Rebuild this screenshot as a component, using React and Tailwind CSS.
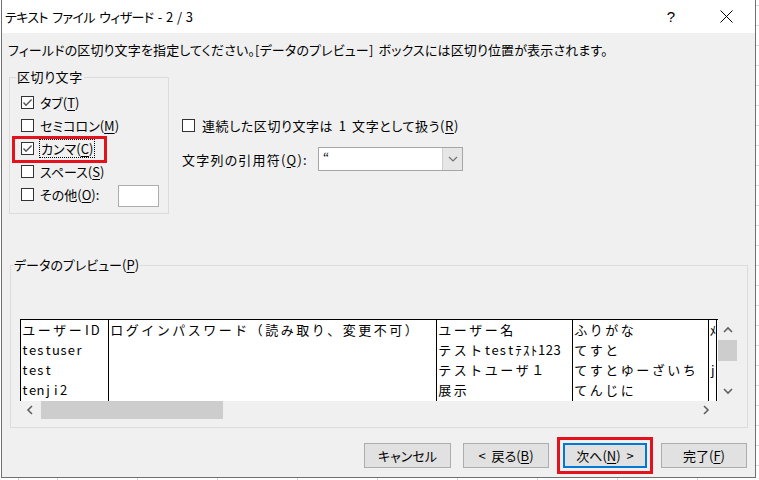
import React from "react";

function Check({ checked }) {
  return (
    <span className="w-[13px] h-[13px] border border-[#333333] bg-white flex items-center justify-center shrink-0">
      {checked && (
        <svg width="11" height="11" viewBox="0 0 11 11">
          <polyline points="1.5,5.5 4,8.2 9.6,2.4" fill="none" stroke="#555555" strokeWidth="1.4" />
        </svg>
      )}
    </span>
  );
}

function U({ children }) {
  return <span className="underline underline-offset-2">{children}</span>;
}

function isFull(ch) {
  const c = ch.charCodeAt(0);
  return c > 0xff && !(c >= 0xff61 && c <= 0xff9f);
}

function Mono({ text }) {
  return (
    <span className="flex">
      {Array.from(text).map((ch, i) => (
        <span key={i} className={(isFull(ch) ? "w-[15.5px]" : "w-[7.75px]") + " shrink-0 text-center"}>
          {ch}
        </span>
      ))}
    </span>
  );
}

function Chevron({ dir }) {
  const pts = {
    up: "1,6 5,2 9,6",
    down: "1,2 5,6 9,2",
    left: "6,1 2,5 6,9",
    right: "2,1 6,5 2,9",
  }[dir];
  const vert = dir === "up" || dir === "down";
  return (
    <svg width={vert ? 10 : 8} height={vert ? 8 : 10} viewBox={vert ? "0 0 10 8" : "0 0 8 10"}>
      <polyline points={pts} fill="none" stroke="#606060" strokeWidth="1.6" />
    </svg>
  );
}

const cols = [
  { w: "w-[88px]", rows: ["ユーザーID", "testuser", "test", "tenji2"] },
  { w: "w-[328px]", rows: ["ログインパスワード（読み取り、変更不可）", "", "", ""] },
  { w: "w-[136px]", rows: ["ユーザー名", "テストtestﾃｽﾄ123", "テストユーザ１", "展示"] },
  { w: "w-[136px]", rows: ["ふりがな", "てすと", "てすとゆーざいち", "てんじに"] },
  { w: "w-[8px]", rows: ["ﾒ", "", "j", ""] },
  { w: "w-[2px]", rows: ["", "", "", ""] },
];

function Btn({ children, className = "" }) {
  return (
    <button
      type="button"
      className={"h-[25px] border border-[#adadad] bg-[#e1e1e1] flex items-center justify-center leading-[17px] whitespace-nowrap [word-spacing:3px] " + className}
    >
      {children}
    </button>
  );
}

export default function App() {
  return (
    <div className="w-[759px] h-[480px] overflow-hidden bg-white flex flex-col font-['Noto_Sans_CJK_JP','Noto_Sans',sans-serif] text-[13px] text-black">
      <div className="flex h-[478px] shrink-0">
        <div className="ml-[1px] w-[755px] h-[478px] border-l border-r border-b border-[#707070] flex flex-col bg-[#f0f0f0] [font-feature-settings:'palt'] [word-spacing:2px]">
          {/* Title bar */}
          <div className="h-[33px] bg-white flex items-center shrink-0">
            <span className="pl-[3px] leading-[17px] whitespace-nowrap tracking-[-0.6px]">テキスト ファイル ウィザード - 2 / 3</span>
            <span className="ml-auto w-[12px] text-center text-[15px] leading-[18px] font-['Liberation_Sans',sans-serif]">?</span>
            <span className="ml-[43px] mr-[22px] w-[13px] h-[13px] flex items-center justify-center">
              <svg width="13" height="13" viewBox="0 0 13 13">
                <line x1="0.5" y1="0.5" x2="12.5" y2="12.5" stroke="#000" strokeWidth="1" />
                <line x1="12.5" y1="0.5" x2="0.5" y2="12.5" stroke="#000" strokeWidth="1" />
              </svg>
            </span>
          </div>

          {/* Body */}
          <div className="flex-1 flex flex-col">
            <p className="mt-[8px] pl-[6px] leading-[17px] whitespace-nowrap tracking-[0.15px]">
              フィールドの区切り文字を指定してください。[データのプレビュー] ボックスには区切り位置が表示されます。
            </p>

            <div className="flex mt-[11px]">
              <fieldset className="ml-[7px] w-[160px] h-[145px] border border-[#dcdcdc]">
                <legend className="ml-[6px] px-[1px] leading-[16px] tracking-[0.6px]">区切り文字</legend>
                <div className="mt-[6px] ml-[11px] flex flex-col">
                  <div className="h-[23px] flex items-center">
                    <Check checked />
                    <span className="ml-[6px] leading-[17px]">タブ(<U>T</U>)</span>
                  </div>
                  <div className="h-[23px] flex items-center">
                    <Check />
                    <span className="ml-[6px] leading-[17px]">セミコロン(<U>M</U>)</span>
                  </div>
                  <div className="h-[23px] flex items-center relative">
                    <Check checked />
                    <span className="ml-[5px] leading-[17px] border border-dotted border-black px-[1px]">カンマ(<U>C</U>)</span>
                    <span className="absolute left-[-9px] top-[-1px] w-[95px] h-[27px] border-[3px] border-[#e3121c]" />
                  </div>
                  <div className="h-[23px] flex items-center">
                    <Check />
                    <span className="ml-[6px] leading-[17px]">スペース(<U>S</U>)</span>
                  </div>
                  <div className="h-[23px] flex items-center">
                    <Check />
                    <span className="ml-[6px] leading-[17px] flex-1">その他(<U>O</U>):</span>
                    <span className="w-[41px] h-[22px] mr-[9px] mt-[2px] bg-white border border-[#adadad]" />
                  </div>
                </div>
              </fieldset>

              <div className="ml-[12px] flex flex-col">
                <div className="mt-[48px] h-[16px] flex items-center">
                  <span className="ml-[1px]">
                    <Check />
                  </span>
                  <span className="ml-[7px] leading-[17px] whitespace-nowrap tracking-[0.6px]">連続した区切り文字は 1 文字として扱う(<U>R</U>)</span>
                </div>
                <div className="mt-[14px] h-[24px] flex items-center">
                  <span className="w-[137px] pl-[1px] leading-[17px] whitespace-nowrap tracking-[1.2px]">文字列の引用符(<U>Q</U>):</span>
                  <div className="w-[145px] h-[24px] border border-[#a6a6a6] bg-white flex">
                    <span className="flex-1 pl-[4px] leading-[20px]">“</span>
                    <span className="w-[20px] bg-[#e6e6e6] border-l border-[#cfcfcf] flex items-center justify-center">
                      <svg width="10" height="6" viewBox="0 0 10 6">
                        <polyline points="1,1 5,5 9,1" fill="none" stroke="#707070" strokeWidth="1.2" />
                      </svg>
                    </span>
                  </div>
                </div>
              </div>
            </div>

            {/* Preview */}
            <fieldset className="mt-[43px] ml-[8px] w-[738px] h-[171px] border border-[#dcdcdc]">
              <legend className="ml-[2px] px-[1px] leading-[16px]">データのプレビュー(<U>P</U>)</legend>
              <div className="mt-[46px] ml-[9px] w-[717px] h-[100px] flex flex-col [font-feature-settings:normal] [word-spacing:0px]">
                <div className="flex h-[82px]">
                  <div className="w-[698px] h-[82px] bg-white border-t border-black flex overflow-hidden text-[13px]">
                    {cols.map((c, ci) => (
                      <div key={ci} className={c.w + " shrink-0 border-l border-black overflow-hidden flex flex-col"}>
                        {c.rows.map((r, ri) => (
                          <div key={ri} className="h-[20px] leading-[19px] whitespace-nowrap">
                            <Mono text={r} />
                          </div>
                        ))}
                      </div>
                    ))}
                  </div>
                  <div className="w-[19px] h-[82px] flex flex-col">
                    <div className="h-[21px] flex items-center justify-center">
                      <Chevron dir="up" />
                    </div>
                    <div className="h-[21px] bg-[#cdcdcd]" />
                    <div className="flex-1" />
                    <div className="h-[20px] flex items-center justify-center">
                      <Chevron dir="down" />
                    </div>
                  </div>
                </div>
                <div className="flex h-[18px]">
                  <div className="w-[698px] flex">
                    <div className="w-[19px] flex items-center justify-center">
                      <Chevron dir="left" />
                    </div>
                    <div className="ml-[2px] w-[182px] bg-[#cdcdcd]" />
                    <div className="flex-1" />
                    <div className="w-[19px] mr-[3px] flex items-center justify-center">
                      <Chevron dir="right" />
                    </div>
                  </div>
                  <div className="w-[19px]" />
                </div>
              </div>
            </fieldset>

            {/* Buttons */}
            <div className="mt-[15px] flex">
              <Btn className="ml-[362px] w-[87px]">キャンセル</Btn>
              <Btn className="ml-[12px] w-[86px]">
                &lt; 戻る(<U>B</U>)
              </Btn>
              <div className="ml-[14px] relative">
                <button
                  type="button"
                  className="w-[84px] h-[25px] border-2 border-[#0078d7] bg-[#e1e1e1] flex items-center justify-center leading-[17px] whitespace-nowrap [word-spacing:3px]"
                >
                  次へ(<U>N</U>) &gt;
                </button>
                <span className="absolute left-[-6px] top-[-6px] w-[96px] h-[37px] border-[3px] border-[#e3121c]" />
              </div>
              <Btn className="ml-[14px] w-[86px]">
                完了(<U>F</U>)
              </Btn>
            </div>
          </div>
        </div>
        <div className="flex-1 bg-[repeating-linear-gradient(180deg,#d9d9d9_0_1px,transparent_1px_20px)] bg-[position:0_5px]" />
      </div>
      <div className="flex-1 bg-[repeating-linear-gradient(90deg,#d9d9d9_0_1px,transparent_1px_80px)] bg-[position:57px_0]" />
    </div>
  );
}
